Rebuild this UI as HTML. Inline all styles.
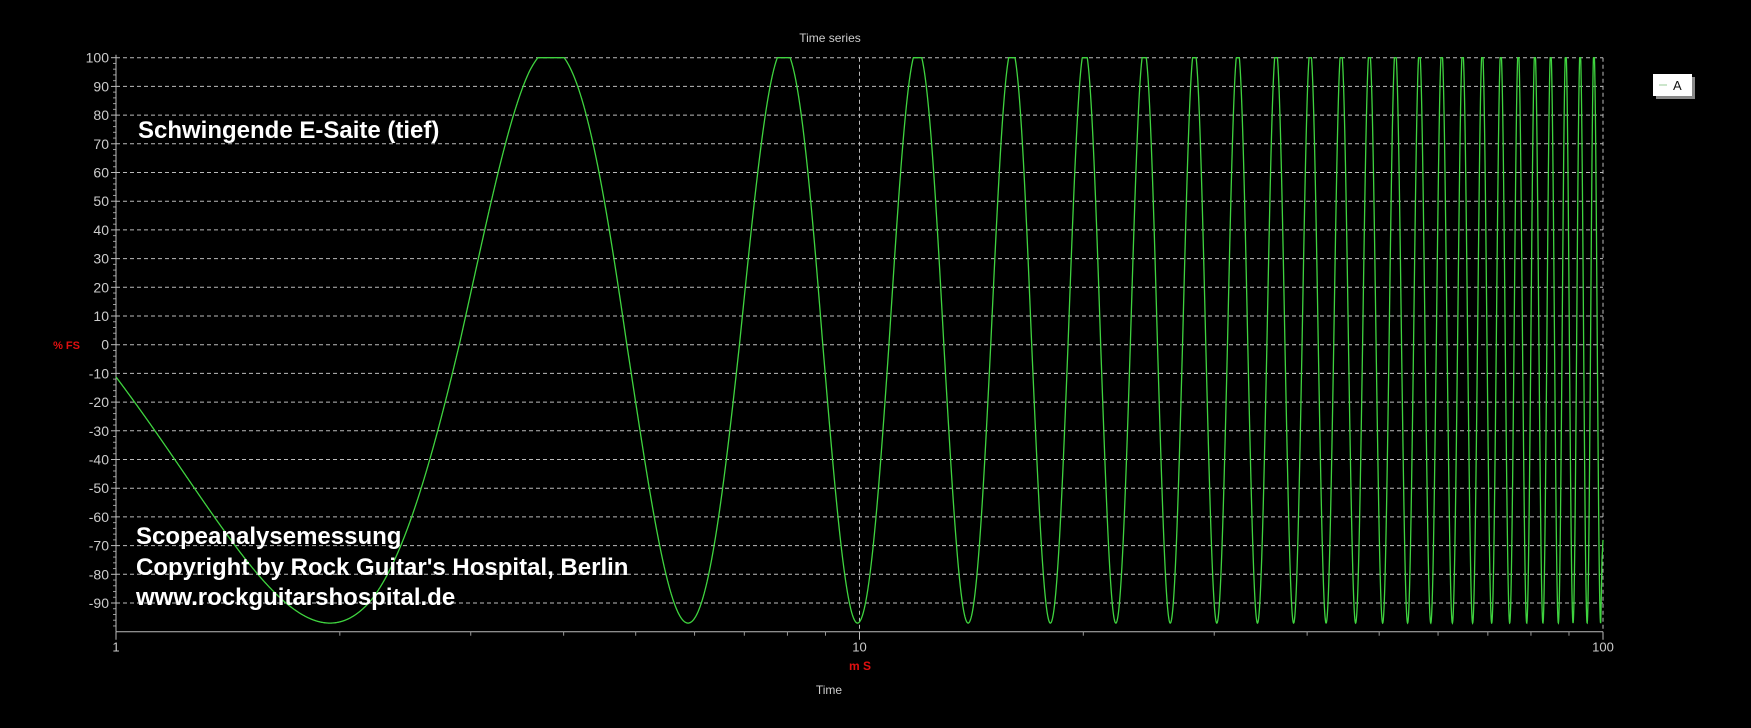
<!DOCTYPE html>
<html><head><meta charset="utf-8"><style>
html,body{margin:0;padding:0;background:#000;width:1751px;height:728px;overflow:hidden}
svg{display:block}
text{font-family:"Liberation Sans",Arial,sans-serif}
</style></head><body>
<svg id="s" width="1751" height="728" xmlns="http://www.w3.org/2000/svg">
<rect width="1751" height="728" fill="#000"/>
<text x="830" y="42" fill="#ccc" font-size="12" text-anchor="middle">Time series</text>
<g id="grid"></g>
<path id="wave" fill="none" stroke="#3fd33f" stroke-width="1.3"/>
<text x="138" y="138" fill="#fff" font-size="24" font-weight="bold">Schwingende E-Saite (tief)</text>
<text x="136" y="544" fill="#fff" font-size="24" font-weight="bold">Scopeanalysemessung</text>
<text x="136" y="575" fill="#fff" font-size="24" font-weight="bold">Copyright by Rock Guitar's Hospital, Berlin</text>
<text x="136" y="605" fill="#fff" font-size="24" font-weight="bold">www.rockguitarshospital.de</text>
<text x="80" y="349" fill="#e01010" font-size="11" font-weight="bold" text-anchor="end">% FS</text>
<text x="860" y="670" fill="#e01010" font-size="12" font-weight="bold" text-anchor="middle">m S</text>
<text x="829" y="694" fill="#ccc" font-size="12" text-anchor="middle">Time</text>
<rect x="1656" y="77" width="39" height="22" fill="#888"/>
<rect x="1653" y="74" width="39" height="22" fill="#fff"/>
<line x1="1659" y1="85" x2="1667" y2="85" stroke="#9c9" stroke-width="1"/>
<text x="1673" y="90" fill="#111" font-size="13">A</text>
</svg>
<script>
var NS="http://www.w3.org/2000/svg",g=document.getElementById("grid");
var L=116,R=1603,T=57.7,B=631.7;
function Y(v){return T+(100-v)*(B-T)/200}
function X(t){return L+Math.log10(t)*(R-L)/2}
function add(tag,a){var e=document.createElementNS(NS,tag);for(var k in a)e.setAttribute(k,a[k]);g.appendChild(e);return e}
for(var v=100;v>=-90;v-=10){var y=Y(v);
 add("line",{x1:L,y1:y,x2:R,y2:y,stroke:"#bbb","stroke-width":1,"stroke-dasharray":"4,3"});
 add("line",{x1:L-5,y1:y,x2:L,y2:y,stroke:"#bbb"});
 var t=add("text",{x:L-7,y:y+5,fill:"#ccc","font-size":"14","text-anchor":"end"});t.textContent=v;}
for(var v=98;v>-100;v-=2){if(v%10)add("line",{x1:L-3,y1:Y(v),x2:L,y2:Y(v),stroke:"#999"});}
add("line",{x1:X(10),y1:T,x2:X(10),y2:B,stroke:"#bbb","stroke-dasharray":"4,3"});
add("line",{x1:X(100),y1:T,x2:X(100),y2:B,stroke:"#bbb","stroke-dasharray":"4,3"});
add("line",{x1:L,y1:T-3,x2:L,y2:B,stroke:"#bbb"});
add("line",{x1:L,y1:B,x2:R,y2:B,stroke:"#bbb"});
[1,10,100].forEach(function(t){var x=X(t);add("line",{x1:x,y1:B,x2:x,y2:B+8,stroke:"#bbb"});
 var e=add("text",{x:x,y:B+20,fill:"#ccc","font-size":"13","text-anchor":"middle"});e.textContent=t;});
[1,10].forEach(function(d){for(var k=2;k<10;k++){var x=X(d*k);add("line",{x1:x,y1:B,x2:x,y2:B+4,stroke:"#999"});}});
var d="";
for(var px=L;px<=R-2;px+=0.2){var t=Math.pow(10,(px-L)*2/(R-L));
 var f=Math.min(1,Math.max(0,(3.6-t)/1.4));var te=t-0.12*f;
 var ph=2*Math.PI*(te-3.85)/4.06;var c=Math.cos(ph);var v=c>0?103*c:97*c;if(v>100)v=100;
 d+=(d?"L":"M")+px.toFixed(1)+","+Y(v).toFixed(1);}
d+="L"+(R-1)+","+Y(-75)+"L"+R+","+Y(-68);
document.getElementById("wave").setAttribute("d",d);
</script>
</body></html>
